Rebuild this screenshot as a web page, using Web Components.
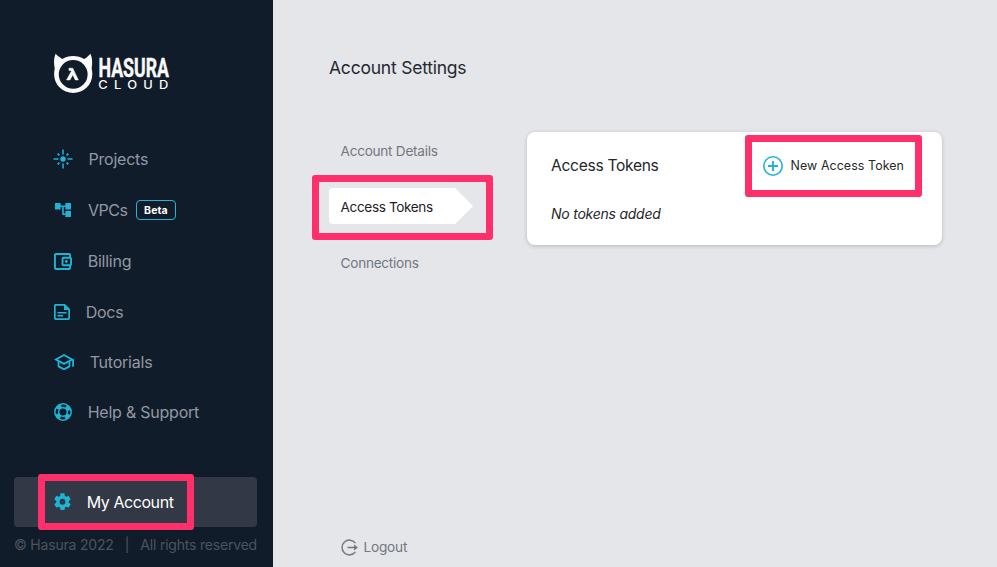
<!DOCTYPE html>
<html lang="en"><head><meta charset="utf-8"><title>Account Settings</title>
<style>html,body{margin:0;height:100%;overflow:hidden}body{font-family:Inter,"Liberation Sans",sans-serif;background:#e5e6ea}</style></head>
<body><account-page></account-page>
<script>
const define=(name,html)=>customElements.define(name,class extends HTMLElement{
  constructor(){super();const t=document.createElement('template');
    t.innerHTML=typeof html==='function'?html(this):html;
    this.attachShadow({mode:'open'}).append(t.content.cloneNode(true));}});

const icons={
projects:['0 0 20 20',20,20,'<circle cx="10" cy="10" r="2.7"/><path d="M9.3 .5h1.5v5H9.3zM9.3 14.5h1.5v5H9.3zM.5 9.3h5v1.4h-5zM14.5 9.3h5v1.4h-5z"/><path d="M4.1 5.3l1.2-1.2 1.7 1.7-1.2 1.2zM15.9 5.3l-1.2-1.2-1.7 1.7 1.2 1.2zM4.1 14.7l1.2 1.2 1.7-1.7-1.2-1.2zM15.9 14.7l-1.2 1.2-1.7-1.7 1.2-1.2z"/>'],
vpcs:['2 3 20 18',16,14.4,'<path d="M22 11V3h-7v3H9V3H2v8h7V8h2v10h4v3h7v-8h-7v3h-2V8h2v3h7z"/>'],
billing:['3 3 19 18',18,17,'<path d="M21 7.28V5c0-1.1-.9-2-2-2H5c-1.11 0-2 .9-2 2v14c0 1.1.89 2 2 2h14c1.1 0 2-.9 2-2v-2.28c.59-.35 1-.98 1-1.72V9c0-.74-.41-1.37-1-1.72zM20 9v6h-7V9h7zM5 19V5h14v2h-6c-1.1 0-2 .9-2 2v6c0 1.1.9 2 2 2h6v2H5z"/><circle cx="16" cy="12" r="1.5"/>'],
docs:['0 0 16 16',16,16,'<path fill-rule="evenodd" d="M1.7 0H11l5 5v9.3c0 1-.7 1.7-1.7 1.7H1.7C.7 16 0 15.3 0 14.3V1.7C0 .7.7 0 1.7 0zM1.7 1.7v12.6h12.6V6H10V1.7z"/><path d="M3.5 7.9h9v1.5h-9zM3.5 11h5.5v1.5h-5.5z"/>'],
tutorials:['1 3 22 18',20,16.4,'<path d="M12 3 1 9l4 2.18v6L12 21l7-3.82v-6l2-1.09V17h2V9L12 3zm6.82 6L12 12.72 5.18 9 12 5.28 18.82 9zM17 15.99l-5 2.73-5-2.73v-3.72L12 15l5-2.73v3.72z"/>'],
help:['0 0 18 18',18,18,'<g fill="none" stroke="currentColor"><circle cx="9" cy="9" r="8.2" stroke-width="1.5"/><circle cx="9" cy="9" r="4.3" stroke-width="1.5"/><circle cx="9" cy="9" r="6.2" stroke-width="3.9" stroke-dasharray="4.9 4.839" stroke-dashoffset="-2.42"/></g>'],
gear:['2.2 2 19.6 20',17,17.4,'<path fill-rule="evenodd" d="M19.14 12.94c.04-.3.06-.61.06-.94 0-.32-.02-.64-.07-.94l2.03-1.58c.18-.14.23-.41.12-.61l-1.92-3.32c-.12-.22-.37-.29-.59-.22l-2.39.96c-.5-.38-1.03-.7-1.62-.94l-.36-2.54c-.04-.24-.24-.41-.48-.41h-3.84c-.24 0-.43.17-.47.41l-.36 2.54c-.59.24-1.13.57-1.62.94l-2.39-.96c-.22-.08-.47 0-.59.22L2.74 8.87c-.12.21-.08.47.12.61l2.03 1.58c-.05.3-.09.63-.09.94s.02.64.07.94l-2.03 1.58c-.18.14-.23.41-.12.61l1.92 3.32c.12.22.37.29.59.22l2.39-.96c.5.38 1.03.7 1.62.94l.36 2.54c.05.24.24.41.48.41h3.84c.24 0 .44-.17.47-.41l.36-2.54c.59-.24 1.13-.56 1.62-.94l2.39.96c.22.08.47 0 .59-.22l1.92-3.32c.12-.22.07-.47-.12-.61l-2.01-1.58zM12 15.4A3.4 3.4 0 1 1 12 8.6a3.4 3.4 0 0 1 0 6.8z"/>'],
plus:['0 0 20 20',20,20,'<g fill="none" stroke="currentColor"><circle cx="10" cy="10" r="9.2" stroke-width="1.6"/><path d="M5 10h10M10 5v10" stroke-width="1.9"/></g>'],
logout:['0 0 17 17',17,17,'<g fill="none" stroke="currentColor" stroke-width="1.5"><path d="M14.4 4.1A7.4 7.4 0 1 0 14.4 12.9"/><path d="M6.5 8.5h8"/></g><path d="M13 5.6l4 2.9-4 2.9z"/>']};

define('ui-icon',el=>{const [vb,w,h,body]=icons[el.getAttribute('name')];
return `<style>:host{display:block;flex:none;color:#1eb4d4}svg{display:block}</style><svg width="${w}" height="${h}" viewBox="${vb}" preserveAspectRatio="none" fill="currentColor">${body}</svg>`});

define('hasura-logo',`<style>:host{display:block;height:42px}svg{display:block;overflow:visible}</style>
<svg width="120" height="42" viewBox="53 53 120 42" fill="#fafafa">
<path fill-rule="evenodd" d="M55.6 53.8C57 55.4 59.3 57.2 62.2 59C65.4 57 69 56 73 56C77.200 56 80.900 57 84.200 59C87.200 57.200 89 55.600 90.300 53.800C92.300 57 92.600 63 91.700 68.500C92.200 70.500 92.300 72.500 92.300 74.300A19.100 18.700 0 0 1 54.100 74.300C54.100 72.500 54.300 70.500 54.700 68.500C53.700 63 53.600 58.500 55.600 53.800ZM73.200 60A14.400 14.400 0 1 0 73.200 88.800A14.400 14.400 0 1 0 73.200 60Z"/>
<path d="M69 68.200h3.700l5.600 11.700h-3l-2.500-5.200-2.900 5.200h-3.300l4.700-8.500-.5-1H69z" stroke="#fafafa" stroke-width=".6"/>
<text x="98.500" y="77" font-family="Roboto,sans-serif" font-size="25.300" font-weight="700" textLength="70.500" lengthAdjust="spacingAndGlyphs" stroke="#fafafa" stroke-width=".4">HASURA</text>
<text transform="translate(98.300 89) scale(1.150 1)" font-family="Inter,sans-serif" font-size="11.200" font-weight="500" letter-spacing="5.450">CLOUD</text></svg>`);

define('nav-item',el=>`<style>:host{display:flex;align-items:center;height:50px;box-sizing:border-box;color:#9298a3;font-size:16px;letter-spacing:-.23px;line-height:24px;white-space:nowrap}
ui-icon{margin-right:var(--gap,15.700px)}
:host([active]){background:#323845;color:#fff;border-radius:4px;letter-spacing:-.43px}</style>
<ui-icon name="${el.getAttribute('icon')}"></ui-icon><slot></slot>`);

define('beta-badge',`<style>:host{display:flex;align-items:center;justify-content:center;box-sizing:border-box;width:40px;height:20px;padding-top:1px;margin-left:8.500px;border:1px solid #2bb1d2;border-radius:4px;color:#fff;font-size:10.500px;font-weight:700;letter-spacing:.1px}</style><slot></slot>`);

define('side-bar',`<style>:host{display:flex;flex-direction:column;box-sizing:border-box;width:273px;height:567px;padding:53px 16px 0 14px;background:#111c2a}
hasura-logo{margin-left:39px}nav{display:flex;flex-direction:column;gap:1px;margin-top:39px}
nav-item{padding-left:40px}
footer{display:flex;justify-content:space-between;color:#4b535f;font-size:14px;letter-spacing:-.2px;line-height:20px;margin-top:8px;white-space:pre}
</style><hasura-logo></hasura-logo>
<nav><nav-item icon="projects" style="padding-left:39.400px;--gap:15.200px">Projects</nav-item>
<nav-item icon="vpcs" style="padding-left:41px;--gap:17px;letter-spacing:-.5px">VPCs<beta-badge>Beta</beta-badge></nav-item>
<nav-item icon="billing">Billing</nav-item>
<nav-item icon="docs">Docs</nav-item>
<nav-item icon="tutorials" style="margin-top:-1px">Tutorials</nav-item>
<nav-item icon="help" style="margin-top:-1px">Help &amp; Support</nav-item></nav>
<nav-item icon="gear" active style="margin-top:40px">My Account</nav-item>
<footer><span>© Hasura 2022</span><span>|</span><span>All rights reserved</span></footer>`);

define('settings-tab',`<style>:host{display:block;width:144px;height:36px;box-sizing:border-box;padding-left:11.600px;font-size:13.600px;letter-spacing:-.27px;line-height:38px;color:#737780;white-space:nowrap}
:host([active]){color:#1e2126;letter-spacing:-.38px;background:#fff;border-radius:4px;clip-path:polygon(0 0,126px 0,144px 18px,126px 36px,0 36px)}</style><slot></slot>`);

define('token-card',`<style>:host{display:block;box-sizing:border-box;width:415px;height:113px;padding:20px 38px 0 24px;border-radius:8px;background:#fff;box-shadow:0 1px 4px #0003;color:#24272b}
header{display:flex;justify-content:space-between;align-items:center;height:28px}
h2{margin:0;font-size:15.600px;font-weight:400;letter-spacing:-.3px;line-height:28px}button{display:flex;align-items:center;gap:7.500px;padding:0;border:0;background:none;color:inherit;font:12.400px Inter,sans-serif;letter-spacing:.09px}button span{padding-bottom:1px}
p{margin:24px 0 0;font-size:14px;font-style:italic;letter-spacing:-.24px;line-height:20px}</style>
<header><h2>Access Tokens</h2><button><ui-icon name="plus"></ui-icon><span>New Access Token</span></button></header><p>No tokens added</p>`);

define('log-out',`<style>:host{display:flex;align-items:center;gap:5.500px;font-size:13.700px;letter-spacing:-.25px;line-height:20px;color:#737780}ui-icon{color:#737780}</style><ui-icon name="logout"></ui-icon><slot></slot>`);

define('mark-box',`<style>:host{position:absolute;box-sizing:border-box;border:7px solid #ff2f6c;border-radius:3px;pointer-events:none}</style>`);

define('account-page',`<style>:host{display:flex;position:relative;width:997px;height:567px;overflow:hidden}
main{flex:1;display:flex;flex-direction:column;box-sizing:border-box;padding:54px 55px 10px 56px}
h1{margin:0;font-size:17.500px;font-weight:400;letter-spacing:-.22px;line-height:28px;color:#26292f}
.row{display:flex;justify-content:space-between;margin-top:50px}
.tabs{display:flex;flex-direction:column;gap:20px}log-out{margin:auto 0 0 12px}</style>
<side-bar></side-bar><main><h1>Account Settings</h1><div class="row"><div class="tabs"><settings-tab>Account Details</settings-tab><settings-tab active>Access Tokens</settings-tab><settings-tab>Connections</settings-tab></div><token-card></token-card></div><log-out>Logout</log-out></main>
<mark-box style="left:38px;top:474px;width:156px;height:56px"></mark-box>
<mark-box style="left:312px;top:175px;width:181px;height:65px"></mark-box>
<mark-box style="left:745px;top:135px;width:177px;height:62px"></mark-box>`);
</script></body></html>
